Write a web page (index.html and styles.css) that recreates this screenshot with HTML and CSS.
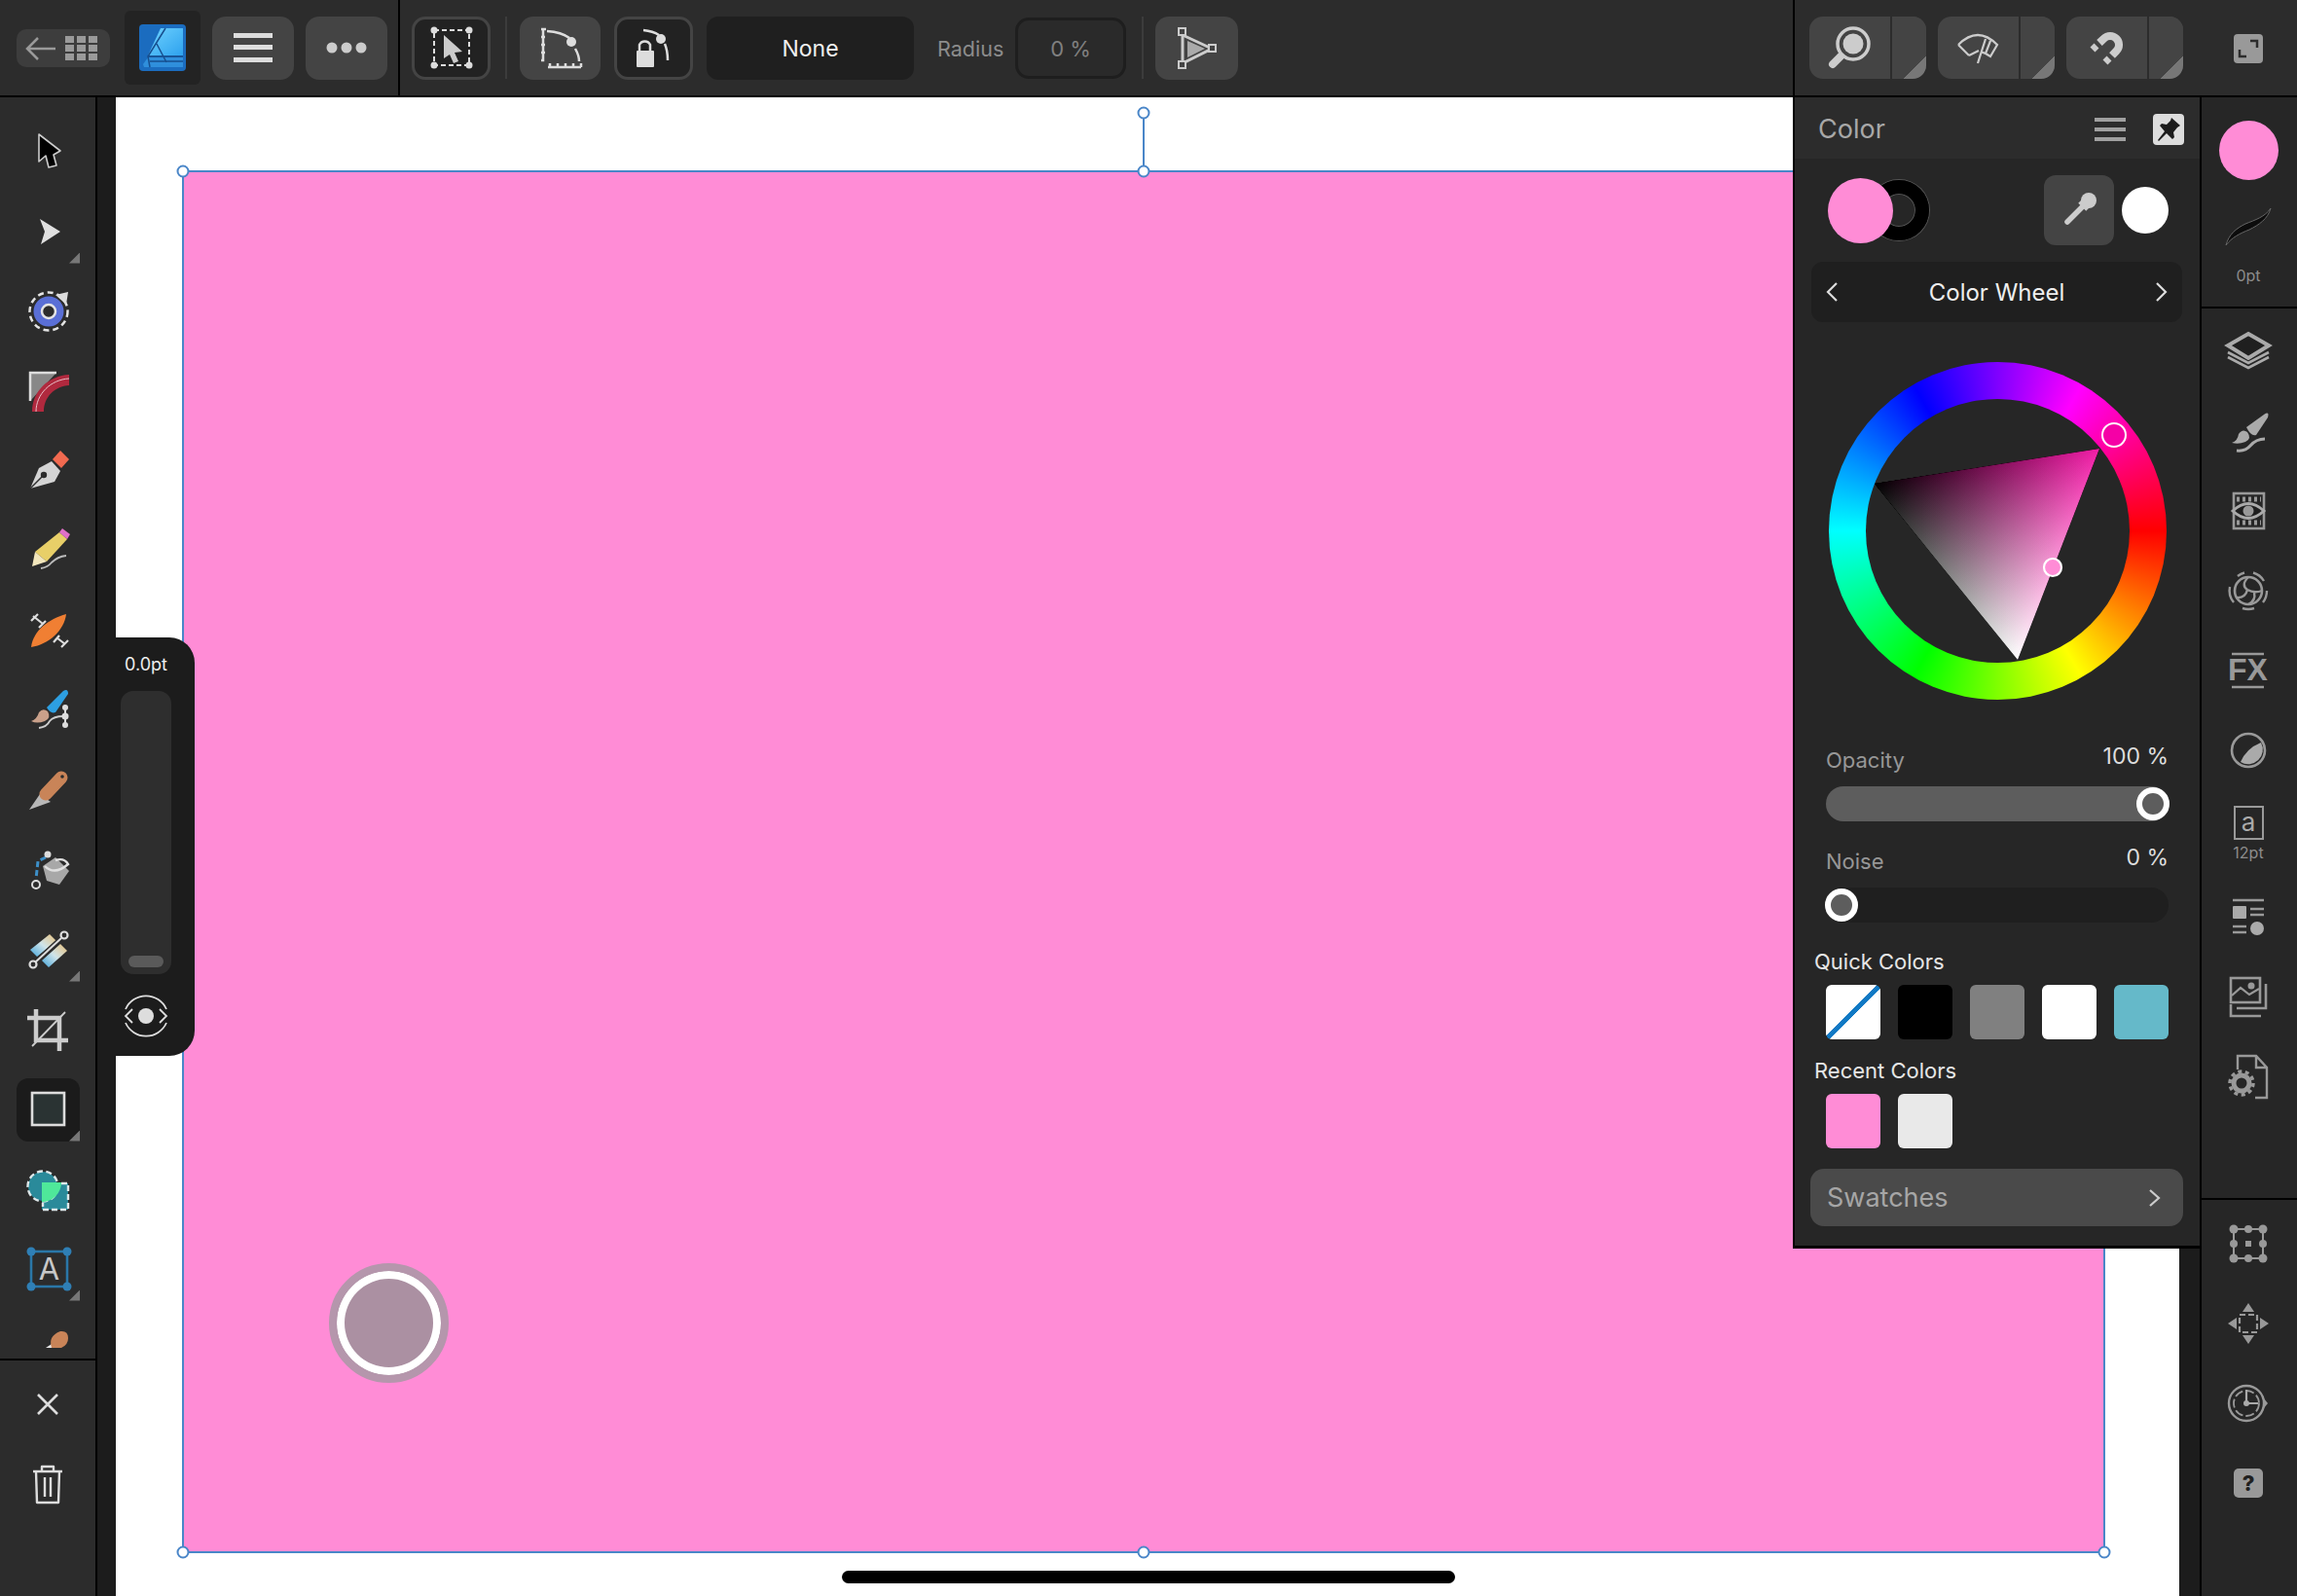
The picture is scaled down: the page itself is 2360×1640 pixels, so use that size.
FILE: index.html
```html
<!DOCTYPE html>
<html lang="en">
<head>
    <meta charset="UTF-8">
    <title>Affinity Designer - Color</title>
    <link rel="stylesheet" href="styles.css">
</head>
<body>
    <!-- Top bar -->
    <header class="topbar">
        <div class="tb-main">
            <div class="back-btn">
                <svg width="96" height="39" viewBox="0 0 96 39"><path d="M12 20H40M22 9L11 20L22 31" fill="none" stroke="#9a9a9a" stroke-width="2.5"/><g fill="#9a9a9a"><rect x="50" y="7" width="9" height="7"/><rect x="62" y="7" width="9" height="7"/><rect x="74" y="7" width="9" height="7"/><rect x="50" y="16" width="9" height="7"/><rect x="62" y="16" width="9" height="7"/><rect x="74" y="16" width="9" height="7"/><rect x="50" y="25" width="9" height="7"/><rect x="62" y="25" width="9" height="7"/><rect x="74" y="25" width="9" height="7"/></g></svg>
            </div>
            <div class="logo-tile">
                <svg width="48" height="48" viewBox="0 0 48 48">
                    <defs><linearGradient id="logoBlue" x1="0" y1="0" x2="1" y2="1"><stop offset="0" stop-color="#6fd2ff"/><stop offset="1" stop-color="#2ea2ee"/></linearGradient></defs>
                    <rect width="48" height="48" rx="4" fill="#1b6cbf"/>
                    <path d="M22 4H45V32H9Z" fill="url(#logoBlue)"/>
                    <path d="M5 44H45V34H9L4 41Z" fill="#2f8fdc"/>
                    <path d="M27 4L9 33L11 44M18 20L28 39M9 33H45M11 38H45" fill="none" stroke="#174f8f" stroke-width="1.5"/>
                </svg>
            </div>
            <div class="tb-btn w84">
                <svg width="40" height="30" viewBox="0 0 40 30"><g fill="#ddd"><rect width="40" height="5"/><rect y="12" width="40" height="5"/><rect y="25" width="40" height="5"/></g></svg>
            </div>
            <div class="tb-btn w84 dots-gap">
                <svg width="42" height="14" viewBox="0 0 42 14"><g fill="#ccc"><circle cx="6" cy="7" r="5.5"/><circle cx="21" cy="7" r="5.5"/><circle cx="36" cy="7" r="5.5"/></g></svg>
            </div>
        </div>
        <div class="tb-mid">
            <div class="tb-btn dark-btn w81">
                <svg width="46" height="46" viewBox="0 0 46 46"><rect x="5" y="5" width="36" height="36" fill="none" stroke="#ddd" stroke-width="2" stroke-dasharray="5 3"/><g fill="#ddd"><circle cx="5" cy="5" r="3.5"/><circle cx="41" cy="5" r="3.5"/><circle cx="5" cy="41" r="3.5"/><circle cx="41" cy="41" r="3.5"/></g><path d="M15 10L34 27L26 28L30 37L25 39L21 30L15 34Z" fill="#ccc"/></svg>
            </div>
            <span class="thin-div first-div"></span>
            <div class="tb-btn w83">
                <svg width="46" height="46" viewBox="0 0 46 46"><path d="M5 4V36H3M3 4H8M3 12H7M3 20H7M3 28H7M10 43H44M12 43V39M20 43V39M28 43V39M36 43V39M44 43V39M9 6Q24 7 32 13M38 24Q42 31 42 37" fill="none" stroke="#ddd" stroke-width="2.5"/><circle cx="34" cy="17" r="5" fill="#ddd"/></svg>
            </div>
            <div class="tb-btn dark-btn w81">
                <svg width="46" height="46" viewBox="0 0 46 46"><path d="M8 27V20A6 6 0 0 1 19 20V27M12 5Q22 6 28 10M34 19Q37 26 37 36" fill="none" stroke="#ddd" stroke-width="2.5"/><rect x="5" y="26" width="18" height="17" rx="1" fill="#ddd"/><circle cx="30" cy="14" r="5" fill="#ddd"/></svg>
            </div>
            <div class="none-field">None</div>
            <span class="radius-label">Radius</span>
            <div class="radius-field">0 %</div>
            <span class="thin-div last-div"></span>
            <div class="tb-btn w85">
                <svg width="46" height="46" viewBox="0 0 46 46"><path d="M8 10L38 24L8 39Z" fill="none" stroke="#ccc" stroke-width="3"/><path d="M13 16L31 24L13 33Z" fill="#aaa"/><g fill="#444" stroke="#ccc" stroke-width="2"><rect x="4" y="3" width="7" height="7"/><rect x="4" y="37" width="7" height="7"/><rect x="35" y="20" width="7" height="7"/></g></svg>
            </div>
        </div>
        <div class="tb-right">
            <div class="split-btn">
                <div class="split-main">
                    <svg width="60" height="60" viewBox="0 0 60 60"><circle cx="34" cy="26" r="16" fill="none" stroke="#ccc" stroke-width="3.5"/><circle cx="34" cy="26" r="10.5" fill="#ccc"/><path d="M21 39L13 47" stroke="#ccc" stroke-width="8" stroke-linecap="round"/></svg>
                </div>
                <div class="split-more"></div>
            </div>
            <div class="split-btn">
                <div class="split-main">
                    <svg width="60" height="60" viewBox="0 0 60 60"><path d="M10 27Q30 7 50 27L43 39L38 36M31 33L21 38ZM21 38L10 27M38 21L30 46M43 23L38 36L33 34" fill="none" stroke="#ccc" stroke-width="2.2"/></svg>
                </div>
                <div class="split-more"></div>
            </div>
            <div class="split-btn">
                <div class="split-main">
                    <svg width="60" height="60" viewBox="0 0 60 60"><path d="M23 25L27.600 20.600A9 9 0 0 1 40.400 33.400L36 38" fill="none" stroke="#ccc" stroke-width="8"/><path d="M20 28L16 32M33 41L29 45" stroke="#ccc" stroke-width="7"/></svg>
                </div>
                <div class="split-more"></div>
            </div>
            <div class="expand-btn">
                <svg width="30" height="30" viewBox="0 0 30 30"><rect width="30" height="30" rx="4" fill="#999"/><path d="M17 7H24V14M13 23H6V16" fill="none" stroke="#2c2c2c" stroke-width="2.5"/></svg>
            </div>
        </div>
    </header>

    <div class="main">
        <!-- Left tools -->
        <aside class="left-bar">
            <div class="tool-list">
                <div class="tool"><div class="tool-btn">
                    <svg class="ico" viewBox="0 0 60 60"><path d="M20 12L42 29L35 33L38 44L30 46L27 34L20 40Z" fill="#000" stroke="#ccc" stroke-width="1.6" stroke-linejoin="round"/></svg>
                </div></div>
                <div class="tool"><div class="tool-btn more">
                    <svg class="ico" viewBox="0 0 60 60"><path d="M21 17L42 30L22 43L26 30Z" fill="#e0e0e0"/></svg>
                </div></div>
                <div class="tool"><div class="tool-btn">
                    <svg class="ico" viewBox="0 0 60 60"><circle cx="30" cy="30" r="19.5" fill="none" stroke="#e4e4e4" stroke-width="2.5" stroke-dasharray="6 4"/><circle cx="30" cy="30" r="15.5" fill="#5a6fd6"/><circle cx="30" cy="30" r="7" fill="#2c2c2c" stroke="#e4e4e4" stroke-width="2.5"/><path d="M37 13L50 10L48 23Z" fill="#ddd"/></svg>
                </div></div>
                <div class="tool"><div class="tool-btn">
                    <svg class="ico" viewBox="0 0 60 60"><path d="M11 40V11H38" fill="#888" stroke="#ddd" stroke-width="2.5"/><path d="M13 51C13 30 30 14 51 13V24C36 25 25 36 25 51Z" fill="#b0293e"/><path d="M17 51C17 33 32 18 51 17" fill="none" stroke="#e8c0c8" stroke-width="1"/></svg>
                </div></div>
                <div class="tool"><div class="tool-btn">
                    <svg class="ico" viewBox="0 0 60 60"><path d="M11 48L20 27L33 20L42 30L36 41Z" fill="#d4d4d4"/><path d="M11 48L25 34" stroke="#2c2c2c" stroke-width="1.5"/><circle cx="25" cy="34" r="3.2" fill="#2c2c2c"/><path d="M42 9L51 18L43 27L34 18Z" fill="#f26a50"/></svg>
                </div></div>
                <div class="tool"><div class="tool-btn">
                    <svg class="ico" viewBox="0 0 60 60"><path d="M16 31L41 11L49 18L28 41Z" fill="#e8cf68"/><path d="M13 46L16 31L28 41Z" fill="#f2e6bc"/><path d="M41 11L44 7L52 13L49 18Z" fill="#e070c8"/><path d="M22 48Q29 47 33 42Q39 36 48 35" fill="none" stroke="#bbb" stroke-width="1.8"/></svg>
                </div></div>
                <div class="tool"><div class="tool-btn">
                    <svg class="ico" viewBox="0 0 60 60"><path d="M12 47C14 30 30 18 48 13C46 30 30 44 12 47Z" fill="#f07f33"/><path d="M14 15L24 23M12 20L19 13M20 27L27 20M38 37L47 44M35 42L41 35M43 47L50 40" stroke="#ddd" stroke-width="2.2"/></svg>
                </div></div>
                <div class="tool"><div class="tool-btn">
                    <svg class="ico" viewBox="0 0 60 60"><path d="M28 27L45 10Q50 7 50 13L37 32Q32 34 28 27Z" fill="#2d9fe2"/><path d="M12 41Q18 39 20 32Q24 27 29 31Q33 38 26 41Q18 44 12 41Z" fill="#c9a08a"/><path d="M20 48Q28 47 31 41Q35 36 45 36" fill="none" stroke="#ccc" stroke-width="1.8"/><path d="M47 26V46" stroke="#ddd" stroke-width="2"/><g fill="#ddd"><circle cx="47" cy="27" r="3"/><circle cx="47" cy="36" r="3.5"/><circle cx="47" cy="45" r="3"/></g></svg>
                </div></div>
                <div class="tool"><div class="tool-btn">
                    <svg class="ico" viewBox="0 0 60 60"><path d="M10 50L21 34L32 42Z" fill="#b8b8b8"/><path d="M27 34L43 17" stroke="#c98458" stroke-width="13" stroke-linecap="round"/><circle cx="44" cy="16" r="1.8" fill="#2c2c2c"/></svg>
                </div></div>
                <div class="tool"><div class="tool-btn">
                    <svg class="ico" viewBox="0 0 60 60"><path d="M24 26L37 17L51 31L41 45L28 41Z" fill="#a8a8a8"/><path d="M26 26Q36 36 50 24Q46 17 37 20" fill="none" stroke="#e0e0e0" stroke-width="2.4"/><path d="M27 17L19 21L17 39" fill="none" stroke="#3d8fc8" stroke-width="3" stroke-dasharray="6 3"/><circle cx="29" cy="14" r="3.5" fill="#ddd"/><circle cx="17" cy="45" r="4" fill="#2c2c2c" stroke="#ddd" stroke-width="2"/></svg>
                </div></div>
                <div class="tool"><div class="tool-btn more">
                    <svg class="ico" viewBox="0 0 60 60"><defs><linearGradient id="mixBar" x1="0" y1="1" x2="1" y2="0"><stop offset="0" stop-color="#3fa2d8"/><stop offset=".5" stop-color="#cfe4ea"/><stop offset="1" stop-color="#e8c07a"/></linearGradient></defs><path d="M11 30L31 14L38 21L18 37Z" fill="url(#mixBar)"/><path d="M23 41L42 24L49 31L30 48Z" fill="url(#mixBar)"/><path d="M16 43L43 18" stroke="#2c2c2c" stroke-width="5"/><path d="M16 43L43 18" stroke="#ddd" stroke-width="2"/><g fill="#2c2c2c" stroke="#ddd" stroke-width="2.2"><circle cx="14" cy="45" r="3.5"/><circle cx="46" cy="15" r="3.5"/></g></svg>
                </div></div>
                <div class="tool"><div class="tool-btn">
                    <svg class="ico" viewBox="0 0 60 60"><path d="M17 9V41H50M8 18H41V52" fill="none" stroke="#ccc" stroke-width="4.5"/><path d="M13 47L47 12" stroke="#ccc" stroke-width="1.8"/></svg>
                </div></div>
                <div class="tool"><div class="tool-btn more selected">
                    <svg class="ico" viewBox="0 0 60 60"><rect x="13" y="13" width="33" height="33" fill="#2a3333" stroke="#ddd" stroke-width="2.6"/></svg>
                </div></div>
                <div class="tool"><div class="tool-btn">
                    <svg class="ico" viewBox="0 0 60 60"><rect x="23" y="24" width="27" height="27" fill="#2a8a9a"/><circle cx="24" cy="27" r="15" fill="#2a8a9a"/><circle cx="24" cy="27" r="15.500" fill="none" stroke="#dfe8ea" stroke-width="2.400" stroke-dasharray="6 3.500"/><path d="M43 24H50V51H24V44" fill="none" stroke="#dfe8ea" stroke-width="2.400" stroke-dasharray="6 3"/><path d="M23 23H43A20 20 0 0 1 23 43Z" fill="#4fe89a"/></svg>
                </div></div>
                <div class="tool"><div class="tool-btn more">
                    <svg class="ico" viewBox="0 0 60 60"><rect x="12" y="12" width="37" height="36" fill="none" stroke="#2a77a8" stroke-width="2.6"/><g fill="#2f7fb5"><circle cx="12" cy="12" r="4.5"/><circle cx="49" cy="12" r="4.5"/><circle cx="12" cy="48" r="4.5"/><circle cx="49" cy="48" r="4.5"/></g><text class="svg-a" x="30.5" y="41" text-anchor="middle">A</text></svg>
                </div></div>
                <div class="tool"><div class="tool-btn">
                    <svg class="ico" viewBox="0 0 60 60"><path d="M27 29L33 25L36 29Z" fill="#e8e8e8"/><path d="M33 29Q29 17 42 12Q50 11 50 19Q50 26 43 29Z" fill="#c98458"/></svg>
                </div></div>
            </div>
            <div class="tool-foot">
                <div class="tool"><svg class="ico" viewBox="0 0 60 60"><path d="M20 20L40 40M40 20L20 40" stroke="#ddd" stroke-width="2.6"/></svg></div>
                <div class="tool"><svg class="ico" viewBox="0 0 60 60"><path d="M15 17H45M24 17V12H36V17M18 17L19 49H41L42 17M27 23V43M33 23V43" fill="none" stroke="#ddd" stroke-width="2.4" stroke-linejoin="round"/></svg></div>
            </div>
        </aside>

        <!-- Canvas -->
        <section class="workspace">
            <div class="canvas">
                <div class="shape">
                    <span class="rotate-line"></span>
                    <span class="handle h-rot"></span>
                    <span class="handle h-tl"></span>
                    <span class="handle h-tm"></span>
                    <span class="handle h-bl"></span>
                    <span class="handle h-bm"></span>
                    <span class="handle h-br"></span>
                </div>
                <div class="touch-dot"></div>
                <div class="home-bar"></div>
            </div>
        </section>

        <!-- Right studio tabs -->
        <aside class="right-bar">
            <div class="rb-top">
                <div class="rb-dot"></div>
                <svg class="rb-stroke" width="48" height="40" viewBox="0 0 48 40"><path d="M1 39C4 28 11 22 21 17C31 13 41 10 47 1C44 12 35 18 25 23C15 27 7 31 1 39Z" fill="#0c0c0c" stroke="#666" stroke-width="1"/></svg>
                <div class="rb-label">0pt</div>
            </div>
            <div class="rb-tabs">
                <div class="tab"><svg class="ico" viewBox="0 0 60 60"><path d="M30 12L51 24L30 37L9 24Z" fill="#1f1f1f" stroke="#aaa" stroke-width="4"/><path d="M9 31L30 42L51 31M9 36L30 47L51 36" fill="none" stroke="#aaa" stroke-width="2.6"/></svg></div>
                <div class="tab"><svg class="ico" viewBox="0 0 60 60"><path d="M28 26L46 13Q52 9 50 16L38 34Q33 36 28 26Z" fill="#aaa"/><path d="M13 42Q19 40 20 33Q24 27 29 31Q34 38 27 41Q20 44 13 42Z" fill="#aaa"/><path d="M18 50Q27 51 32 45Q38 38 47 38" fill="none" stroke="#aaa" stroke-width="3"/></svg></div>
                <div class="tab"><svg class="ico" viewBox="0 0 60 60"><rect x="15" y="12" width="31" height="36" fill="none" stroke="#999" stroke-width="2.6"/><path d="M18 18H43M18 42H43" stroke="#999" stroke-width="5" stroke-dasharray="3 3"/><path d="M14 30Q30 15 46 30Q30 45 14 30Z" fill="#1f1f1f" stroke="#aaa" stroke-width="3"/><circle cx="30" cy="30" r="5.5" fill="#999"/></svg></div>
                <div class="tab"><svg class="ico" viewBox="0 0 60 60"><g fill="none" stroke="#999"><path d="M19 15A19 19 0 0 1 26 11.500M35 11.500A19 19 0 0 1 46 20M49 30A19 19 0 0 1 45 42M36 48A19 19 0 0 1 24 48M15 42A19 19 0 0 1 11 26" stroke-width="2.4"/><circle cx="30" cy="30" r="14" stroke-width="2.6"/><path d="M30 16Q22 24 29 29Q36 33 44 30M17 37Q27 38 29 29M30 44Q38 40 36 32" stroke-width="2.4"/></g></svg></div>
                <div class="tab"><svg class="ico" viewBox="0 0 60 60"><path d="M13 13H46M13 47H46" stroke="#999" stroke-width="2.6"/><text class="svg-fx" x="29.500" y="40" text-anchor="middle">FX</text></svg></div>
                <div class="tab"><svg class="ico" viewBox="0 0 60 60"><circle cx="30" cy="30" r="17" fill="none" stroke="#999" stroke-width="2.6"/><path d="M43 22A15 15 0 0 1 22 42Q28 28 43 22Z" fill="#aaa"/></svg></div>
                <div class="tab tab-text">
                    <div class="a-box">a</div>
                    <div class="rb-label">12pt</div>
                </div>
                <div class="tab"><svg class="ico" viewBox="0 0 60 60"><path d="M14 12H46M32 21H46M32 27H46M14 39H28M14 45H28" stroke="#999" stroke-width="2.4"/><rect x="14" y="18" width="14" height="13" rx="1" fill="#aaa"/><circle cx="39" cy="41" r="7" fill="#aaa"/></svg></div>
                <div class="tab"><svg class="ico" viewBox="0 0 60 60"><rect x="12" y="10" width="30" height="25" fill="none" stroke="#999" stroke-width="2.6"/><path d="M13 28L22 20L31 27L41 21" fill="none" stroke="#999" stroke-width="2.2"/><circle cx="33" cy="18" r="3.5" fill="#999"/><path d="M48 16V41H18M12 37V49H43" fill="none" stroke="#999" stroke-width="2.6"/></svg></div>
                <div class="tab"><svg class="ico" viewBox="0 0 60 60"><path d="M19 22V8H38L49 20V51H37M38 8V20H49" fill="none" stroke="#999" stroke-width="2.4"/><circle cx="23" cy="36" r="8" fill="none" stroke="#999" stroke-width="5"/><circle cx="23" cy="36" r="12" fill="none" stroke="#999" stroke-width="3.5" stroke-dasharray="4 3.500"/></svg></div>
            </div>
            <div class="rb-bottom">
                <div class="tab"><svg class="ico" viewBox="0 0 60 60"><rect x="15" y="15" width="30" height="30" fill="none" stroke="#999" stroke-width="2"/><g fill="#999"><circle cx="15" cy="15" r="4.500"/><circle cx="30" cy="15" r="4"/><circle cx="45" cy="15" r="4.500"/><circle cx="15" cy="30" r="4"/><circle cx="45" cy="30" r="4"/><circle cx="15" cy="45" r="4.500"/><circle cx="30" cy="45" r="4"/><circle cx="45" cy="45" r="4.500"/><rect x="27" y="27" width="6" height="6"/></g></svg></div>
                <div class="tab"><svg class="ico" viewBox="0 0 60 60"><rect x="21" y="21" width="18" height="18" fill="none" stroke="#999" stroke-width="2.2" stroke-dasharray="6 3"/><g fill="#999"><path d="M30 9L36 18H24Z"/><path d="M30 51L24 42H36Z"/><path d="M9 30L18 24V36Z"/><path d="M51 30L42 36V24Z"/></g></svg></div>
                <div class="tab"><svg class="ico" viewBox="0 0 60 60"><circle cx="28" cy="30" r="18" fill="none" stroke="#999" stroke-width="2.4"/><circle cx="28" cy="30" r="13" fill="none" stroke="#999" stroke-width="1.8" stroke-dasharray="9 3"/><path d="M28 16V30H40" fill="none" stroke="#aaa" stroke-width="2.2"/><circle cx="28" cy="30" r="3" fill="#aaa"/><path d="M46 25L50 30L46 35Z" fill="#999"/></svg></div>
                <div class="tab"><div class="help-box">?</div></div>
            </div>
        </aside>

        <!-- Stylus size popup -->
        <div class="size-popup">
            <div class="size-value">0.0pt</div>
            <div class="size-track"><div class="size-thumb"></div></div>
            <svg class="size-eye" width="48" height="48" viewBox="0 0 48 48"><path d="M3 17A23 23 0 0 1 45 17M3 31A23 23 0 0 0 45 31M10 17L3 24L10 31M38 17L45 24L38 31" fill="none" stroke="#ddd" stroke-width="1.800"/><circle cx="24" cy="24" r="8" fill="#ddd"/></svg>
        </div>

        <!-- Color panel -->
        <div class="panel">
            <div class="panel-head">
                <span class="panel-title">Color</span>
                <svg class="panel-menu" width="32" height="24" viewBox="0 0 32 24"><g fill="#a0a0a0"><rect width="32" height="4"/><rect y="10" width="32" height="4"/><rect y="20" width="32" height="4"/></g></svg>
                <div class="pin-btn">
                    <svg width="32" height="32" viewBox="0 0 32 32"><path d="M19 4L28 12L25 14L21 19L22 24L20 26L14 20L6 28L5 27L12 18L7 12L9 10L14 11L18 7Z" fill="#1c1c1c"/></svg>
                </div>
            </div>
            <div class="panel-body">
                <div class="color-row">
                    <div class="fill-dot"></div>
                    <div class="stroke-ring"></div>
                    <div class="picker-btn">
                        <svg width="72" height="72" viewBox="0 0 72 72"><circle cx="46" cy="26" r="8" fill="#ccc"/><path d="M37 27L45 35" stroke="#ccc" stroke-width="5"/><path d="M40 32L24 48" stroke="#ccc" stroke-width="5.500" stroke-linecap="round"/></svg>
                    </div>
                    <div class="white-dot"></div>
                </div>
                <div class="mode-select">
                    <svg width="14" height="22" viewBox="0 0 14 22"><path d="M12 2L3 11L12 20" fill="none" stroke="#ddd" stroke-width="2.200"/></svg>
                    <span>Color Wheel</span>
                    <svg width="14" height="22" viewBox="0 0 14 22"><path d="M2 2L11 11L2 20" fill="none" stroke="#ddd" stroke-width="2.200"/></svg>
                </div>
                <div class="wheel">
                    <svg class="wheel-overlay" width="347" height="347" viewBox="0 0 347 347">
                        <defs>
                            <linearGradient id="triHue" gradientUnits="userSpaceOnUse" x1="278" y1="89" x2="121.200" y2="216.400"><stop offset="0" stop-color="#f01ea6"/><stop offset="1" stop-color="#000"/></linearGradient>
                            <linearGradient id="triWhite" gradientUnits="userSpaceOnUse" x1="194" y1="306" x2="163" y2="106.900"><stop offset="0" stop-color="#fff"/><stop offset="1" stop-color="#000"/></linearGradient>
                        </defs>
                        <g class="tri-group">
                            <polygon points="47,125 278,89 194,306" fill="#000"/>
                            <polygon class="tri-add" points="47,125 278,89 194,306" fill="url(#triHue)"/>
                            <polygon class="tri-add" points="47,125 278,89 194,306" fill="url(#triWhite)"/>
                        </g>
                        <circle cx="293" cy="75" r="12" fill="#f500a6" stroke="#fff" stroke-width="2"/>
                        <circle cx="230" cy="211" r="9" fill="#ff8cd6" stroke="#fff" stroke-width="2.200"/>
                    </svg>
                </div>
                <div class="slider-head first-head"><span class="slider-name">Opacity</span><span class="slider-value">100 %</span></div>
                <div class="slider full"><div class="thumb"></div></div>
                <div class="slider-head"><span class="slider-name">Noise</span><span class="slider-value">0 %</span></div>
                <div class="slider empty"><div class="thumb"></div></div>
                <div class="section-label quick-label">Quick Colors</div>
                <div class="swatches">
                    <div class="swatch none-swatch"></div>
                    <div class="swatch c-black"></div>
                    <div class="swatch c-grey"></div>
                    <div class="swatch c-white"></div>
                    <div class="swatch c-teal"></div>
                </div>
                <div class="section-label recent-label">Recent Colors</div>
                <div class="swatches recent-row">
                    <div class="swatch c-pink"></div>
                    <div class="swatch c-light"></div>
                </div>
                <div class="swatches-bar">
                    <span>Swatches</span>
                    <svg width="14" height="22" viewBox="0 0 14 22"><path d="M2 3L11 11L2 19" fill="none" stroke="#ccc" stroke-width="2.200"/></svg>
                </div>
            </div>
        </div>
    </div>
</body>
</html>
```

FILE: styles.css
```css
* {
    margin: 0;
    padding: 0;
    box-sizing: border-box;
}

body {
    width: 2360px;
    height: 1640px;
    overflow: hidden;
    display: flex;
    flex-direction: column;
    font-family: Inter, "Noto Sans", sans-serif;
    background: #1c1c1c;
    color: #ddd;
}

svg {
    display: block;
    flex: none;
}

/* Top bar */
.topbar {
    height: 100px;
    flex: none;
    display: flex;
    background: #2c2c2c;
    border-bottom: 2px solid #000;
}

.tb-main {
    width: 411px;
    flex: none;
    display: flex;
    align-items: center;
    padding-left: 17px;
    border-right: 2px solid #000;
}

.tb-mid {
    flex: 1;
    display: flex;
    align-items: center;
    padding-left: 12px;
}

.tb-right {
    width: 518px;
    flex: none;
    display: flex;
    align-items: center;
    padding-left: 15px;
    border-left: 2px solid #000;
}

.back-btn {
    width: 96px;
    height: 39px;
    margin-top: 1px;
    background: #3d3d3d;
    border-radius: 10px;
}

.logo-tile {
    width: 78px;
    height: 76px;
    margin-left: 15px;
    margin-right: 12px;
    background: #232323;
    border-radius: 6px;
    display: flex;
    justify-content: center;
    align-items: center;
}

.tb-btn {
    height: 65px;
    background: #444;
    border-radius: 14px;
    display: flex;
    justify-content: center;
    align-items: center;
    flex: none;
}

.w84 { width: 84px; }
.w81 { width: 81px; }
.w83 { width: 83px; margin-left: 0; }
.w85 { width: 85px; }
.dots-gap { margin-left: 12px; }

.dark-btn {
    background: #222;
    border: 3px solid #444;
}

.thin-div {
    width: 2px;
    height: 64px;
    background: #3c3c3c;
    flex: none;
}

.first-div { margin: 0 13px 0 15px; }
.last-div { margin: 0 12px 0 16px; }

.tb-mid .w83 + .dark-btn { margin-left: 14px; }

.none-field {
    width: 213px;
    height: 65px;
    margin-left: 14px;
    padding-top: 2px;
    background: #1f1f1f;
    border-radius: 12px;
    color: #f0f0f0;
    font-size: 23px;
    display: flex;
    justify-content: center;
    align-items: center;
}

.radius-label {
    width: 68px;
    margin-left: 24px;
    padding-top: 2px;
    color: #8c8c8c;
    font-size: 21.5px;
}

.radius-field {
    width: 114px;
    height: 63px;
    margin-left: 12px;
    padding-top: 2px;
    background: #2a2a2a;
    border: 3px solid #1e1e1e;
    border-radius: 14px;
    color: #808080;
    font-size: 22px;
    display: flex;
    justify-content: center;
    align-items: center;
}

.split-btn {
    width: 120px;
    height: 64px;
    margin-right: 12px;
    display: flex;
    flex: none;
    background: #444;
    border-radius: 14px;
    overflow: hidden;
}

.split-main {
    width: 85px;
    display: flex;
    justify-content: center;
    align-items: center;
    border-right: 2px solid #2c2c2c;
    padding-right: 2px;
}

.split-more {
    flex: 1;
    background: linear-gradient(135deg, #444 0 76%, #777 76% 100%);
}

.expand-btn {
    margin-left: 40px;
    margin-top: 2px;
}

/* Main area */
.main {
    flex: 1;
    position: relative;
    display: flex;
    min-height: 0;
}

.left-bar {
    width: 100px;
    flex: none;
    background: #2c2c2c;
    border-right: 2px solid #000;
    display: flex;
    flex-direction: column;
}

.tool-list {
    height: 1298px;
    flex: none;
    overflow: hidden;
    padding-top: 15px;
    border-bottom: 2px solid #000;
}

.tool-foot {
    padding-top: 4px;
}

.tool {
    height: 82px;
    display: flex;
    justify-content: center;
    align-items: center;
}

.tool-btn {
    width: 65px;
    height: 65px;
    margin-left: 1px;
    position: relative;
    border-radius: 12px;
    display: flex;
    justify-content: center;
    align-items: center;
}

.tool-btn.selected {
    background: #1b1b1b;
}

.tool-btn.more::after {
    content: "";
    position: absolute;
    right: 0;
    bottom: 0;
    width: 11px;
    height: 11px;
    background: #777;
    clip-path: polygon(100% 0, 100% 100%, 0 100%);
}

.ico {
    width: 60px;
    height: 60px;
}

.svg-a {
    font-family: Inter, sans-serif;
    font-size: 31px;
    fill: #c8c8c8;
}

.svg-fx {
    font-family: "Liberation Sans", sans-serif;
    font-weight: bold;
    font-size: 32px;
    fill: #999;
}

/* Canvas */
.workspace {
    flex: 1;
    display: flex;
    padding: 0 21px 0 19px;
    background: #1c1c1c;
}

.canvas {
    flex: 1;
    position: relative;
    background: #fff;
}

.shape {
    position: absolute;
    left: 68px;
    top: 75px;
    width: 1976px;
    height: 1421px;
    background: #ff8cd6;
    border: 2px solid #4a86c8;
}

.handle {
    position: absolute;
    width: 13px;
    height: 13px;
    background: #fff;
    border: 2px solid #4a86c8;
    border-radius: 50%;
    transform: translate(-50%, -50%);
}

.h-rot { left: 986px; top: -61px; }
.h-tl { left: -1px; top: -1px; }
.h-tm { left: 986px; top: -1px; }
.h-bl { left: -1px; top: 1418px; }
.h-bm { left: 986px; top: 1418px; }
.h-br { left: 1973px; top: 1418px; }

.rotate-line {
    position: absolute;
    left: 985px;
    top: -61px;
    width: 2px;
    height: 60px;
    background: #4a86c8;
}

.touch-dot {
    position: absolute;
    left: 219px;
    top: 1198px;
    width: 123px;
    height: 123px;
    background: #ab90a2;
    border: 8px solid #b596ac;
    border-radius: 50%;
    box-shadow: inset 0 0 0 8px #fff;
}

.home-bar {
    position: absolute;
    left: 746px;
    bottom: 13px;
    width: 630px;
    height: 13px;
    background: #000;
    border-radius: 7px;
}

/* Right bar */
.right-bar {
    width: 100px;
    flex: none;
    padding-right: 2px;
    background: #262626;
    border-left: 2px solid #000;
    display: flex;
    flex-direction: column;
}

.rb-top {
    height: 217px;
    flex: none;
    padding-top: 24px;
    display: flex;
    flex-direction: column;
    align-items: center;
    border-bottom: 2px solid #000;
    margin-right: -2px;
    padding-right: 2px;
}

.rb-dot {
    width: 61px;
    height: 61px;
    background: #ff8cd6;
    border-radius: 50%;
}

.rb-stroke {
    margin-top: 28px;
}

.rb-top .rb-label {
    margin-top: 20px;
}

.rb-label {
    font-size: 16px;
    line-height: 20px;
    color: #8c8c8c;
}

.rb-tabs {
    height: 916px;
    flex: none;
    padding-top: 3px;
    border-bottom: 2px solid #000;
    margin-right: -2px;
    padding-right: 2px;
}

.rb-bottom {
    flex: 1;
    padding-top: 4px;
}

.tab {
    height: 82px;
    display: flex;
    justify-content: center;
    align-items: center;
}

.tab-text {
    height: 90px;
    flex-direction: column;
}

.a-box {
    width: 31px;
    height: 35px;
    border: 2px solid #999;
    color: #aaa;
    font-size: 26px;
    line-height: 29px;
    text-align: center;
}

.tab-text .rb-label {
    margin-top: 3px;
}

.help-box {
    width: 30px;
    height: 30px;
    background: #999;
    border-radius: 5px;
    color: #1f1f1f;
    font-size: 22px;
    font-weight: 800;
    line-height: 30px;
    text-align: center;
}

/* Stylus size popup */
.size-popup {
    position: absolute;
    left: 100px;
    top: 555px;
    width: 100px;
    height: 430px;
    background: #1c1c1c;
    border-radius: 0 26px 26px 0;
    display: flex;
    flex-direction: column;
    align-items: center;
    padding-top: 18px;
}

.size-value {
    height: 37px;
    font-size: 18px;
    line-height: 20px;
    color: #eee;
}

.size-track {
    width: 52px;
    height: 291px;
    background: #2e2e2e;
    border-radius: 13px;
    display: flex;
    align-items: flex-end;
    justify-content: center;
    padding-bottom: 7px;
}

.size-thumb {
    width: 36px;
    height: 12px;
    background: #5a5a5a;
    border-radius: 6px;
}

.size-eye {
    margin-top: 19px;
}

/* Color panel */
.panel {
    position: absolute;
    left: 1842px;
    top: 0;
    width: 420px;
    background: #262626;
    border: solid #000;
    border-width: 0 2px 3px 2px;
}

.panel-head {
    height: 63px;
    display: flex;
    align-items: center;
    padding: 2px 16px 0 24px;
    background: #2c2c2c;
}

.panel-title {
    font-size: 27px;
    color: #a8a8a8;
}

.panel-menu {
    margin-left: auto;
}

.pin-btn {
    width: 32px;
    height: 32px;
    margin-left: 28px;
    background: #ddd;
    border-radius: 4px;
}

.color-row {
    height: 106px;
    display: flex;
    align-items: center;
    padding: 0 32px 0 34px;
}

.fill-dot {
    width: 67px;
    height: 67px;
    background: #ff8cd6;
    border-radius: 50%;
    position: relative;
    z-index: 1;
    flex: none;
}

.stroke-ring {
    width: 62px;
    height: 62px;
    margin-left: -25px;
    border: 14px solid #000;
    border-radius: 50%;
    box-shadow: 0 0 0 1px #555, inset 0 0 0 1px #555;
    flex: none;
}

.picker-btn {
    margin-left: auto;
    width: 72px;
    height: 72px;
    background: #444;
    border-radius: 12px;
}

.white-dot {
    width: 48px;
    height: 48px;
    margin-left: 8px;
    background: #fff;
    border-radius: 50%;
}

.mode-select {
    height: 62px;
    margin: 0 18px 0 17px;
    padding: 0 14px 0 14px;
    background: #1f1f1f;
    border-radius: 12px;
    display: flex;
    justify-content: space-between;
    align-items: center;
    font-size: 24px;
    color: #eee;
}

.wheel {
    width: 347px;
    height: 347px;
    margin: 41px 0 0 35px;
    position: relative;
    border-radius: 50%;
    background: conic-gradient(from 90deg, #f00, #ff0, #0f0, #0ff, #00f, #f0f, #f00);
}

/* hole of the ring, the triangle sits over it */
.wheel::before {
    content: "";
    position: absolute;
    left: 38px;
    top: 38px;
    width: 271px;
    height: 271px;
    background: #262626;
    border-radius: 50%;
}

.wheel-overlay {
    position: absolute;
    left: 0;
    top: 0;
}

.tri-group {
    isolation: isolate;
}

.tri-add {
    mix-blend-mode: plus-lighter;
}

.slider-head {
    height: 43px;
    margin: 25px 32px 0;
    display: flex;
    justify-content: space-between;
    align-items: flex-start;
}

.first-head {
    margin-top: 46px;
}

.slider-name {
    margin-top: 4px;
    font-size: 22px;
    line-height: 24px;
    color: #979797;
}

.slider-value {
    font-size: 23px;
    line-height: 24px;
    color: #ddd;
}

.slider {
    height: 36px;
    margin: 0 32px;
    border-radius: 18px;
    display: flex;
    align-items: center;
}

.slider.full {
    background: #5d5d5d;
    justify-content: flex-end;
}

.slider.full .thumb {
    margin-right: -1px;
}

.slider.empty {
    background: #1f1f1f;
}

.slider.empty .thumb {
    margin-left: -1px;
}

.thumb {
    width: 34px;
    height: 34px;
    background: #5d5d5d;
    border: 6px solid #fff;
    border-radius: 50%;
}

.section-label {
    margin-left: 20px;
    font-size: 22px;
    line-height: 24px;
    color: #e6e6e6;
}

.quick-label { margin-top: 28px; }
.recent-label { margin-top: 20px; }

.swatches {
    margin: 12px 32px 0;
    display: flex;
    gap: 18px;
}

.recent-row {
    margin-top: 12px;
}

.swatch {
    width: 56px;
    height: 56px;
    border-radius: 6px;
}

.c-black { background: #000; }
.c-grey { background: #808080; }
.c-white { background: #fff; }
.c-teal { background: #65b9c9; }
.c-pink { background: #ff8cd6; }
.c-light { background: #e9e9e9; }

.none-swatch {
    background: linear-gradient(to bottom right, #fff 0 47%, #0f79c4 47% 53%, #fff 53% 100%);
}

.swatches-bar {
    height: 59px;
    margin: 21px 17px 20px 16px;
    padding: 0 22px 0 17px;
    background: #4a4a4a;
    border-radius: 14px;
    display: flex;
    justify-content: space-between;
    align-items: center;
    font-size: 27px;
    color: #a6a6a6;
}
```
